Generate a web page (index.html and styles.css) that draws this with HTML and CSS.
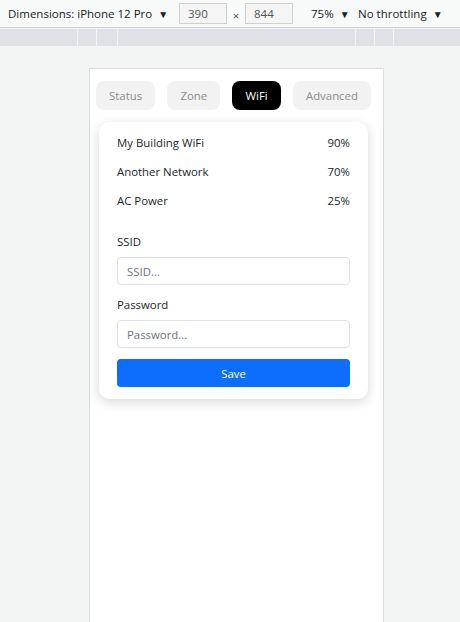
FILE: index.html
```html
<!DOCTYPE html>
<html>
<head>
<meta charset="utf-8">
<link rel="stylesheet" href="styles.css">
</head>
<body>
<div class="toolbar">
  <span class="dim">Dimensions: iPhone 12 Pro <span class="caret">▼</span></span>
  <span class="num">390</span>
  <span class="times">×</span>
  <span class="num">844</span>
  <span class="zoom">75% <span class="caret">▼</span></span>
  <span class="throttle">No throttling <span class="caret">▼</span></span>
</div>
<div class="ruler">
  <div class="seg s1"></div><div class="seg s2"></div><div class="seg s3"></div><div class="seg s4"></div><div class="seg s5"></div><div class="seg s6"></div><div class="seg s7"></div>
</div>
<div class="stage">
  <div class="device">
    <div class="tabs">
      <div class="tab">Status</div>
      <div class="tab">Zone</div>
      <div class="tab active">WiFi</div>
      <div class="tab">Advanced</div>
    </div>
    <div class="card">
      <div class="row"><span>My Building WiFi</span><span>90%</span></div>
      <div class="row"><span>Another Network</span><span>70%</span></div>
      <div class="row"><span>AC Power</span><span>25%</span></div>
      <label class="label first">SSID</label>
      <input class="field" placeholder="SSID...">
      <label class="label">Password</label>
      <input class="field" placeholder="Password...">
      <button class="save">Save</button>
    </div>
  </div>
</div>
</body>
</html>
```
FILE: styles.css
```css
* { box-sizing: border-box; }
html, body { margin: 0; height: 100%; overflow: hidden; }
body {
  background: #f3f4f4;
  font-family: "Open Sans", "Noto Sans", sans-serif;
  color: #212529;
}
.toolbar {
  height: 28px;
  background: #f8f9f9;
  border-bottom: 1px solid #cdcfd2;
  display: flex;
  align-items: center;
  font-size: 11.5px;
  color: #202124;
  padding-left: 8px;
}
.caret { font-size: 10px; margin-left: 3px; color: #202124; }
.dim { width: 171px; }
.num {
  width: 48px;
  height: 21px;
  border: 1px solid #d0d0d0;
  background: #f5f5f5;
  color: #555;
  display: flex;
  align-items: center;
  padding-left: 8px;
}
.times { width: 18px; text-align: center; color: #555; padding-top: 3px; }
.zoom { margin-left: 18px; width: 47px; }
.ruler {
  height: 17px;
  margin-top: 1px;
  display: flex;
  gap: 1px;
}
.seg { background: #dee1e6; height: 100%; }
.s1 { width: 77px; }
.s2 { width: 18px; }
.s3 { width: 20px; }
.s4 { width: 237px; }
.s5 { width: 18px; }
.s6 { width: 18px; }
.s7 { flex: 1; }
.stage { padding-top: 22px; padding-left: 89px; }
.device {
  width: 295px;
  height: 555px;
  background: #fff;
  border: 1px solid #dcdcdc;
  border-bottom: none;
  padding-top: 12px;
}
.tabs {
  display: flex;
  gap: 12.3px;
  padding-left: 6px;
}
.tab {
  height: 29px;
  padding: 0 13px;
  border-radius: 8px;
  background: #f2f2f2;
  color: #8c8c8c;
  font-size: 11.4px;
  display: flex;
  align-items: center;
}
.tab.active { background: #000; color: #fff; }
.card {
  margin: 12px 0 0 9px;
  width: 269px;
  background: #fff;
  border-radius: 10px;
  box-shadow: 0 3px 12px rgba(0,0,0,0.16);
  padding: 6px 18px 12px;
  display: flex;
  flex-direction: column;
  font-size: 11.4px;
}
.row {
  height: 29px;
  display: flex;
  justify-content: space-between;
  align-items: center;
}
.label { line-height: 18px; margin-top: 11px; }
.label.first { margin-top: 18px; }
.field {
  margin-top: 6px;
  height: 28px;
  border: 1px solid #dee2e6;
  border-radius: 4px;
  font: inherit;
  padding: 0 9px;
  color: #212529;
}
.field::placeholder { color: #6c757d; }
.save {
  margin-top: 11px;
  height: 28px;
  border: none;
  border-radius: 4px;
  background: #0d6efd;
  color: #fff;
  font: inherit;
}
```
